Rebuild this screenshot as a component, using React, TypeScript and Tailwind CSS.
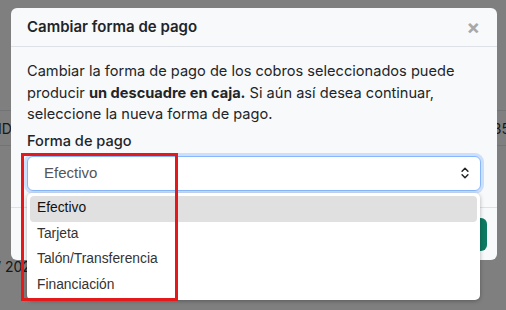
import { ChevronsUpDown } from "lucide-react";

const opciones = ["Efectivo", "Tarjeta", "Talón/Transferencia", "Financiación"];

export default function App() {
  return (
    <div className="relative h-[310px] w-[506px] overflow-hidden bg-white font-['Inter',sans-serif] text-[#212529]">
      {/* Page behind the modal */}
      <div className="pt-[110px]">
        <div className="flex h-[36px] items-center justify-between border-y border-[#e5e7eb] text-[14px] text-[#333]">
          <span className="-ml-[2px]">ID</span>
          <span className="-mr-[4px]">35</span>
        </div>
        <div className="mt-[110px] text-[14px] text-[#333]">
          <span className="-ml-[4px]">/ 2024</span>
        </div>
      </div>

      {/* Backdrop */}
      <div className="absolute inset-0 bg-black/50" />

      {/* Modal */}
      <div className="absolute left-[11px] top-[8px] flex h-[252px] w-[486px] flex-col rounded-[6px] bg-[#f8f9fa]">
        <div className="flex h-[39px] items-center justify-between border-b border-[#dee2e6] pl-4 pr-[17px]">
          <h2 className="text-[15px] font-semibold">Cambiar forma de pago</h2>
          <span className="text-[20px] font-bold leading-none text-[#a8a8a8]">×</span>
        </div>

        <div className="px-4 pt-[14px]">
          <p className="text-[14.6px] leading-[21.5px]">
            Cambiar la forma de pago de los cobros seleccionados puede producir{" "}
            <strong className="font-bold">un descuadre en caja.</strong> Si aún así desea continuar,
            seleccione la nueva forma de pago.
          </p>
          <div className="mt-[5px] text-[14.6px] font-medium leading-[21px]">Forma de pago</div>

          <div className="relative mt-[4px]">
            <div className="flex h-[35px] items-center justify-between rounded-[6px] border border-[#86b7fe] bg-white pl-4 pr-[8px] shadow-[0_0_0_3px_rgba(13,110,253,0.18)] font-['Liberation_Sans',Arial,sans-serif] text-[15px] text-[#555]">
              <span>Efectivo</span>
              <ChevronsUpDown className="h-[14px] w-[14px] text-[#222]" strokeWidth={2.5} />
            </div>

            {/* Native dropdown list */}
            <div className="absolute left-0 top-[37px] z-10 w-[453px] rounded-[5px] bg-white px-[3px] pb-[2px] pt-[3px] shadow-[0_1px_4px_rgba(0,0,0,0.3)] font-['Liberation_Sans',Arial,sans-serif] text-[13.8px] text-[#333]">
              {opciones.map((o, i) => (
                <div
                  key={o}
                  className={
                    i === 0
                      ? "flex h-[26px] items-center rounded-[4px] bg-[#e0e0e0] px-[7px] text-[#111]"
                      : "flex h-[25.5px] items-center px-[7px]"
                  }
                >
                  {o}
                </div>
              ))}
            </div>

            {/* Highlight box */}
            <div className="pointer-events-none absolute -left-[6px] -top-[3px] z-20 h-[148px] w-[157px] border-[3px] border-[#e3191c]" />
          </div>
        </div>

        <div className="mt-auto flex h-[53px] items-center justify-end border-t border-[#dee2e6] pr-[10px]">
          <button className="h-[33px] w-[90px] rounded-[6px] bg-[#0e7a62]" />
        </div>
      </div>
    </div>
  );
}
